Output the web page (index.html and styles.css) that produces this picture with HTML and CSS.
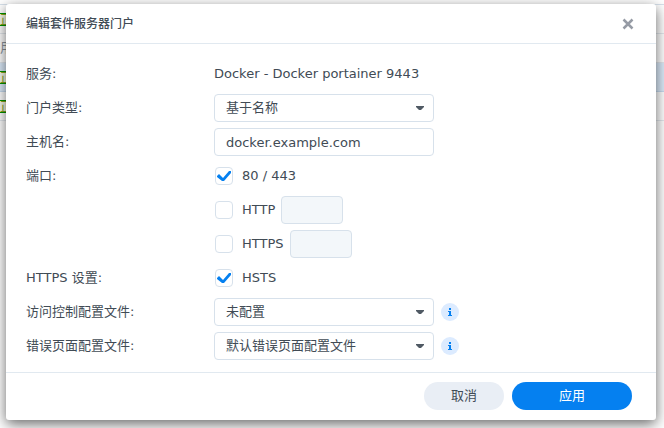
FILE: index.html
```html
<!DOCTYPE html>
<html lang="zh-CN">
<head>
<meta charset="utf-8">
<title>编辑套件服务器门户</title>
<link rel="stylesheet" href="styles.css">
</head>
<body>
<main class="list">
  <div class="list-head"></div>
  <div class="list-row"><span class="tag">正</span></div>
  <div class="list-row group">用</div>
  <div class="list-row selected"><span class="tag">正</span></div>
  <div class="list-row"><span class="tag">正</span></div>
</main>

<section class="dialog" role="dialog" aria-labelledby="dialog-title">
  <header class="dialog-head">
    <h1 id="dialog-title">编辑套件服务器门户</h1>
    <button class="close" type="button" aria-label="关闭">
      <svg viewBox="0 0 12 12" width="12" height="12"><path d="M1.5 1.5L10.5 10.5M10.5 1.5L1.5 10.5"/></svg>
    </button>
  </header>

  <form class="form">
    <div class="row">
      <span class="name">服务:</span>
      <span>Docker - Docker portainer 9443</span>
    </div>
    <div class="row">
      <label class="name" for="type">门户类型:</label>
      <div class="select">
        <select id="type" class="field"><option>基于名称</option></select>
        <svg class="arrow" viewBox="0 0 10 6" width="10" height="6"><path d="M1 1H9V2L6 5H4L1 2Z"/></svg>
      </div>
    </div>
    <div class="row">
      <label class="name" for="host">主机名:</label>
      <input id="host" class="field" type="text" value="docker.example.com">
    </div>
    <div class="row">
      <span class="name">端口:</span>
      <label class="check"><input type="checkbox" checked>80 / 443</label>
    </div>
    <div class="row">
      <span class="name"></span>
      <label class="check"><input type="checkbox">HTTP</label>
      <input class="field port" type="text" aria-label="HTTP" disabled>
    </div>
    <div class="row">
      <span class="name"></span>
      <label class="check"><input type="checkbox">HTTPS</label>
      <input class="field port" type="text" aria-label="HTTPS" disabled>
    </div>
    <div class="row">
      <span class="name">HTTPS 设置:</span>
      <label class="check"><input type="checkbox" checked>HSTS</label>
    </div>
    <div class="row">
      <label class="name" for="access">访问控制配置文件:</label>
      <div class="select">
        <select id="access" class="field"><option>未配置</option></select>
        <svg class="arrow" viewBox="0 0 10 6" width="10" height="6"><path d="M1 1H9V2L6 5H4L1 2Z"/></svg>
      </div>
      <svg class="info" viewBox="0 0 18 18" width="18" height="18"><circle cx="9" cy="9" r="9"/><path d="M8 5h2v2H8zM7 8h3v4h1v1H7v-1h1V9H7z"/></svg>
    </div>
    <div class="row">
      <label class="name" for="error">错误页面配置文件:</label>
      <div class="select">
        <select id="error" class="field"><option>默认错误页面配置文件</option></select>
        <svg class="arrow" viewBox="0 0 10 6" width="10" height="6"><path d="M1 1H9V2L6 5H4L1 2Z"/></svg>
      </div>
      <svg class="info" viewBox="0 0 18 18" width="18" height="18"><circle cx="9" cy="9" r="9"/><path d="M8 5h2v2H8zM7 8h3v4h1v1H7v-1h1V9H7z"/></svg>
    </div>
  </form>

  <footer class="dialog-foot">
    <button class="button" type="button">取消</button>
    <button class="button primary" type="button">应用</button>
  </footer>
</section>
</body>
</html>
```
FILE: styles.css
```css
* {
  box-sizing: border-box;
}

body {
  margin: 0;
  min-height: 100vh;
  overflow: hidden;
  background: #fff;
  color: #414b55;
  font: 13px/20px "DejaVu Sans", "Noto Sans CJK SC", sans-serif;
}

/* Portal list behind the dialog */
.list-head {
  height: 5px;
  border-bottom: 1px solid #d7e1eb;
}

.list-row {
  display: flex;
  align-items: center;
  height: 29px;
  overflow: hidden;
  border-bottom: 1px solid #e4e9ee;
  color: #8c959e;
}

.list-row.selected {
  background: #dcebfa;
  border-color: #c8dcf0;
}

.tag {
  width: 20px;
  height: 13px;
  border: 1px solid #009600;
  border-left: 0;
  background: #f8faea;
  color: #8aa51e;
  line-height: 11px;
}

/* Dialog */
.dialog {
  position: absolute;
  top: 4px;
  right: 8px;
  left: 6px;
  border-radius: 3px;
  background: #fff;
  box-shadow: 0 4px 14px rgba(0, 0, 0, .6);
}

.dialog-head {
  display: flex;
  align-items: center;
  justify-content: space-between;
  height: 40px;
  padding: 0 20px;
  border-bottom: 1px solid #e1e9f0;
}

.dialog-head h1 {
  margin: 0;
  font-size: 12px;
  font-weight: 500;
}

.close {
  display: flex;
  padding: 2px;
  border: 0;
  background: none;
}

.close path {
  stroke: #969ba5;
  stroke-width: 2.5;
}

.form {
  display: grid;
  gap: 6px;
  padding: 16px 20px 12px;
}

.row {
  display: flex;
  align-items: center;
  height: 28px;
  line-height: 22px;
}

.name {
  width: 188px;
}

.field {
  width: 220px;
  height: 28px;
  padding: 0 11px;
  border: 1px solid #d7e1eb;
  border-radius: 4px;
  background: #fff;
  color: inherit;
  font: inherit;
  appearance: none;
}

.select {
  position: relative;
}

.select .field {
  display: block;
}

.arrow {
  position: absolute;
  top: 11px;
  right: 9px;
  fill: #505a64;
  pointer-events: none;
}

.port {
  width: 62px;
  margin-left: 6px;
  background: #f3f7fa;
}

.check {
  display: flex;
  align-items: center;
  gap: 9px;
}

.check input {
  width: 18px;
  height: 18px;
  margin: 0 0 0 1px;
  border: 1px solid #d7e1eb;
  border-radius: 4px;
  background: #fff;
  appearance: none;
}

.check input:checked::before {
  display: block;
  width: 16px;
  height: 16px;
  background: #0580f0;
  clip-path: polygon(1px 8px, 3px 6px, 7px 10px, 13px 3px, 15px 3px, 15px 5px, 8px 13px, 6px 13px, 1px 9px);
  content: "";
}

.info {
  margin-left: 7px;
}

.info circle {
  fill: #dcebff;
}

.info path {
  fill: #0580f0;
}

.dialog-foot {
  display: flex;
  justify-content: flex-end;
  gap: 8px;
  padding: 9px 24px 10px;
  border-top: 1px solid #e1e9f0;
}

.button {
  width: 80px;
  height: 28px;
  padding: 0;
  border: 0;
  border-radius: 14px;
  background: #e9eef5;
  color: inherit;
  font: inherit;
}

.button.primary {
  width: 120px;
  background: #0580f0;
  color: #fff;
}
```
